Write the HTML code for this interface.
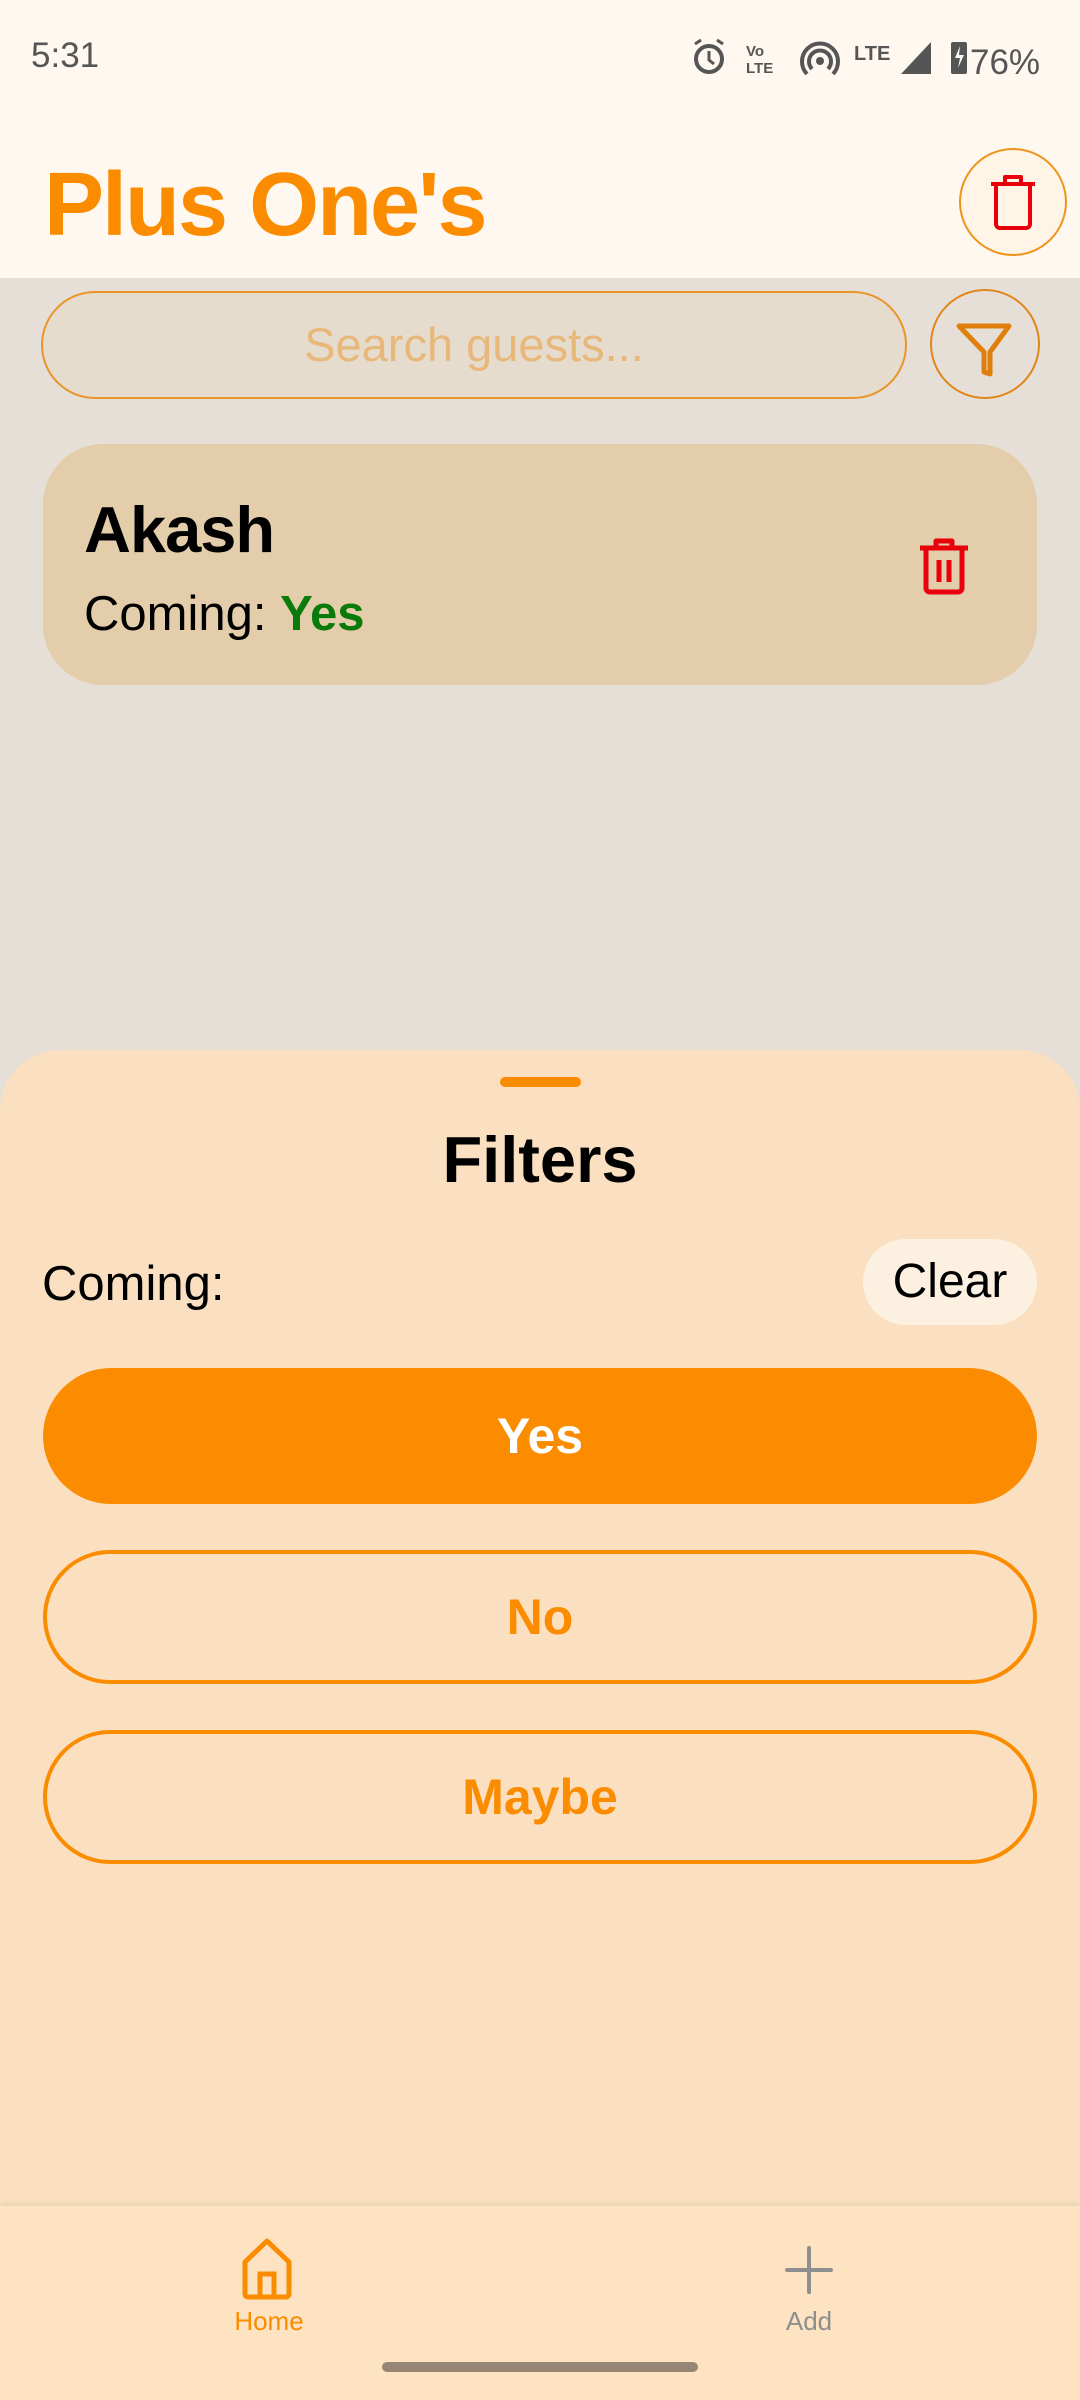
<!DOCTYPE html>
<html><head><meta charset="utf-8"><style>
*{margin:0;padding:0;box-sizing:border-box}
body{width:1080px;height:2400px;position:relative;overflow:hidden;background:#e6dfd8;font-family:"Liberation Sans",sans-serif}
.abs{position:absolute}
</style></head><body>
<div class="abs" style="left:0;top:0;width:1080px;height:278px;background:#fff8f1"></div>
<div class="abs" style="left:31px;top:36px;font-size:35px;color:#555">5:31</div>
<svg class="abs" style="left:686px;top:36px" width="364" height="44" viewBox="0 0 364 44">
 <circle cx="23" cy="23" r="13" fill="none" stroke="#555" stroke-width="4"/>
 <path d="M23 15v9l5 4" fill="none" stroke="#555" stroke-width="3"/>
 <path d="M9 8l6-4M37 8l-6-4" stroke="#555" stroke-width="3"/>
 <text x="60" y="20" font-size="15" fill="#555" font-family="Liberation Sans" font-weight="bold">Vo</text>
 <text x="60" y="37" font-size="15" fill="#555" font-family="Liberation Sans" font-weight="bold">LTE</text>
 <circle cx="134" cy="25" r="4" fill="#555"/>
 <path d="M126 33a11 11 0 1 1 16 0M121 38a18 18 0 1 1 26 0" fill="none" stroke="#555" stroke-width="4"/>
 <text x="168" y="24" font-size="20" fill="#555" font-family="Liberation Sans" font-weight="bold">LTE</text>
 <path d="M215 38L245 6V38Z" fill="#555"/>
 <rect x="265" y="6" width="16" height="32" rx="2" fill="#555"/>
 <path d="M274 10l-5 12h5l-2 10 6-13h-5z" fill="#fff8f1"/>
 <text x="284" y="38" font-size="35" fill="#555" font-family="Liberation Sans">76%</text>
</svg>
<div class="abs" style="left:44px;top:150px;font-size:90px;font-weight:bold;color:#fb8c00;letter-spacing:-2px;line-height:110px">Plus One's</div>
<div class="abs" style="left:959px;top:148px;width:108px;height:108px;border-radius:50%;border:2px solid #f0931c;background:#fff5e6"></div>
<svg class="abs" style="left:987px;top:172px" width="52" height="60" viewBox="0 0 52 60">
 <path d="M4 12h44M18 12V5h16v7M9 12v40a4 4 0 0 0 4 4h26a4 4 0 0 0 4-4V12" fill="none" stroke="#e8000b" stroke-width="4" stroke-linejoin="round"/>
</svg>
<div class="abs" style="left:41px;top:291px;width:866px;height:108px;border-radius:54px;border:2px solid #e8952a;background:#e6dccd;color:#e8b87a;font-size:47px;text-align:center;line-height:104px">Search guests...</div>
<div class="abs" style="left:930px;top:289px;width:110px;height:110px;border-radius:50%;border:2px solid #e0861a"></div>
<svg class="abs" style="left:955px;top:320px" width="60" height="60" viewBox="0 0 60 60">
 <path d="M4 6h50L35 32v22l-6-2V32Z" fill="none" stroke="#e0800c" stroke-width="5" stroke-linejoin="round"/>
</svg>
<div class="abs" style="left:43px;top:444px;width:994px;height:241px;border-radius:60px;background:#e4cdab"></div>
<div class="abs" style="left:84px;top:490px;font-size:65px;font-weight:bold;color:#000;letter-spacing:-1px;line-height:80px">Akash</div>
<div class="abs" style="left:84px;top:584px;font-size:49px;color:#000;line-height:60px">Coming: <b style="color:#0a7a0a">Yes</b></div>
<svg class="abs" style="left:916px;top:536px" width="56" height="60" viewBox="0 0 56 60">
 <path d="M4 12h48M20 12V5h16v7M10 12v40a4 4 0 0 0 4 4h28a4 4 0 0 0 4-4V12M23 24v22M33 24v22" fill="none" stroke="#e8000b" stroke-width="5" stroke-linejoin="round"/>
</svg>
<div class="abs" style="left:0;top:1050px;width:1080px;height:1170px;border-radius:60px 60px 0 0;background:#fae0c0"></div>
<div class="abs" style="left:500px;top:1077px;width:81px;height:10px;border-radius:5px;background:#fb8c00"></div>
<div class="abs" style="left:0;top:1120px;width:1080px;text-align:center;font-size:65px;font-weight:bold;line-height:80px">Filters</div>
<div class="abs" style="left:42px;top:1254px;font-size:49px;line-height:60px">Coming:</div>
<div class="abs" style="left:863px;top:1239px;width:174px;height:86px;border-radius:43px;background:#fcf0e0;font-size:48px;text-align:center;line-height:86px">Clear</div>
<div class="abs" style="left:43px;top:1368px;width:994px;height:136px;border-radius:68px;background:#fb8c00;color:#fff;font-weight:bold;font-size:50px;text-align:center;line-height:136px">Yes</div>
<div class="abs" style="left:43px;top:1550px;width:994px;height:134px;border-radius:67px;border:4px solid #fb8c00;color:#fb8c00;font-weight:bold;font-size:50px;text-align:center;line-height:126px">No</div>
<div class="abs" style="left:43px;top:1730px;width:994px;height:134px;border-radius:67px;border:4px solid #fb8c00;color:#fb8c00;font-weight:bold;font-size:50px;text-align:center;line-height:126px">Maybe</div>
<div class="abs" style="left:0;top:2206px;width:1080px;height:194px;background:#fde3c1;box-shadow:0 -3px 4px rgba(0,0,0,0.06)"></div>
<svg class="abs" style="left:240px;top:2238px" width="58" height="62" viewBox="0 0 58 62">
 <path d="M5 24L27 3 49 24V56a3 3 0 0 1-3 3H8a3 3 0 0 1-3-3Z" fill="none" stroke="#fb8c00" stroke-width="5" stroke-linejoin="round"/>
 <path d="M20 59V36h14v23" fill="none" stroke="#fb8c00" stroke-width="5"/>
</svg>
<div class="abs" style="left:199px;top:2306px;width:140px;text-align:center;font-size:26px;color:#fb8c00">Home</div>
<svg class="abs" style="left:785px;top:2246px" width="48" height="48" viewBox="0 0 48 48">
 <path d="M24 2v44M2 24h44" stroke="#8e8e8e" stroke-width="4" stroke-linecap="round"/>
</svg>
<div class="abs" style="left:739px;top:2306px;width:140px;text-align:center;font-size:26px;color:#8e8e8e">Add</div>
<div class="abs" style="left:382px;top:2362px;width:316px;height:10px;border-radius:5px;background:#978675"></div>
</body></html>
